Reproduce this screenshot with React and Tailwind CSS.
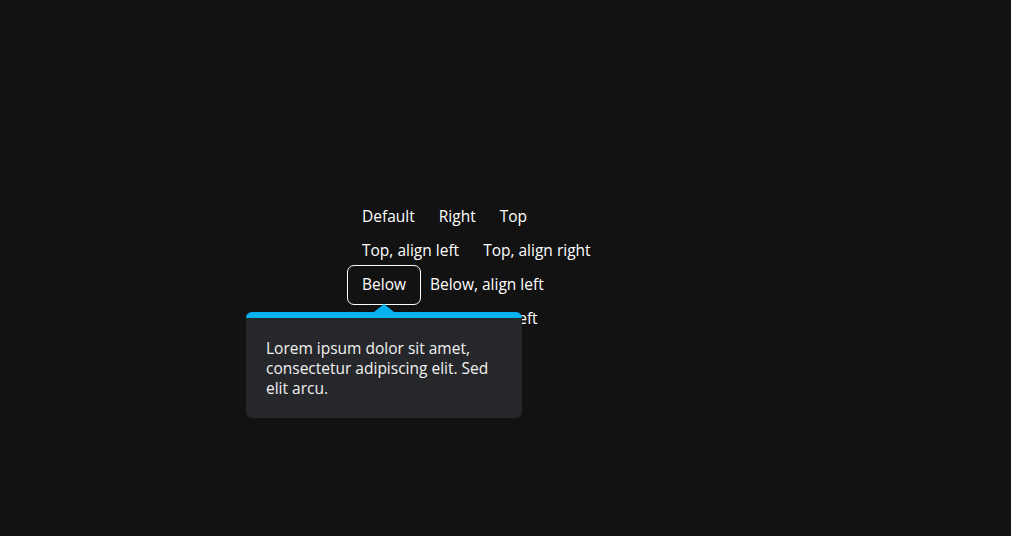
import React from "react";

const rows = [
  ["Default", "Right", "Top"],
  ["Top, align left", "Top, align right"],
  ["Below", "Below, align left"],
  ["Below, align right", "Left"],
];

function TipButton({ label, active }) {
  return (
    <div className="relative">
      <button
        className={`h-[34px] px-3 text-[15.5px] font-medium text-white rounded-[4px] ${
          active ? "outline outline-1 outline-white outline-offset-2" : ""
        }`}
      >
        {label}
      </button>
      {active && (
        <div className="absolute left-1/2 top-[44px] -translate-x-1/2 z-10 w-[276px]">
          {/* arrow */}
          <div className="absolute left-1/2 -top-[8px] -translate-x-1/2 w-0 h-0 border-l-[10px] border-r-[10px] border-b-[8px] border-l-transparent border-r-transparent border-b-[#03b2ee]" />
          <div className="rounded-[6px] overflow-hidden bg-[#26272b]">
            <div className="h-[6px] bg-[#03b2ee]" />
            <p className="px-5 py-5 text-[15.5px] leading-5 font-medium text-[#f2f2f2]">
              Lorem ipsum dolor sit amet, consectetur adipiscing elit. Sed elit arcu.
            </p>
          </div>
        </div>
      )}
    </div>
  );
}

export default function App() {
  return (
    <div
      className="min-h-screen bg-[#121212] flex items-center justify-center"
      style={{ fontFamily: '"Open Sans", "Noto Sans", sans-serif' }}
    >
      <div className="w-[311px] flex flex-col">
        {rows.map((row, i) => (
          <div key={i} className="flex">
            {row.map((label) => (
              <TipButton key={label} label={label} active={label === "Below"} />
            ))}
          </div>
        ))}
      </div>
    </div>
  );
}
